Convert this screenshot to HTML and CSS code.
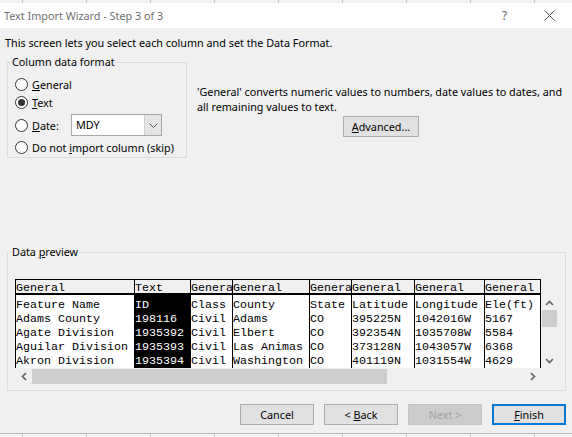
FILE: index.html
```html
<!DOCTYPE html>
<html>
<head>
<meta charset="utf-8">
<title>Text Import Wizard - Step 3 of 3</title>
<link rel="stylesheet" href="styles.css">
</head>
<body>
<div class="sheet sheet-top"></div>
<div class="dialog">
  <div class="titlebar">
    <span class="title">Text Import Wizard - Step 3 of 3</span>
    <span class="cap-btn help">?</span>
    <span class="cap-btn close"><svg width="11" height="11" viewBox="0 0 11 11"><path d="M0.5 0.5L10.5 10.5M10.5 0.5L0.5 10.5" stroke="#555" stroke-width="1" fill="none"/></svg></span>
  </div>
  <div class="content">
    <p class="intro">This screen lets you select each column and set the Data Format.</p>
    <div class="upper">
      <fieldset class="group format">
        <legend>Column data format</legend>
        <label class="opt"><span class="radio"></span><span><u>G</u>eneral</span></label>
        <label class="opt"><span class="radio on"></span><span><u>T</u>ext</span></label>
        <div class="opt opt-date"><span class="radio"></span><span class="date-lbl"><u>D</u>ate:</span><span class="combo"><span class="combo-val">MDY</span><span class="combo-btn"><svg width="9" height="5" viewBox="0 0 9 5"><path d="M0.5 0.5L4.5 4.5L8.5 0.5" stroke="#555" stroke-width="1" fill="none"/></svg></span></span></div>
        <label class="opt"><span class="radio"></span><span>Do not <u>i</u>mport column (skip)</span></label>
      </fieldset>
      <div class="info">
        <p>'General' converts numeric values to numbers, date values to dates, and<br>all remaining values to text.</p>
        <button class="btn adv"><u>A</u>dvanced...</button>
      </div>
    </div>
    <fieldset class="group preview">
      <legend>Data <u>p</u>review</legend>
      <div class="grid-row">
        <div class="viewport">
          <div class="col c1"><div class="hd">General</div><div class="cells"><div>Feature Name</div><div>Adams County</div><div>Agate Division</div><div>Aguilar Division</div><div>Akron Division</div></div></div>
          <div class="col c2"><div class="hd">Text</div><div class="cells sel"><div>ID</div><div>198116</div><div>1935392</div><div>1935393</div><div>1935394</div></div></div>
          <div class="col c3"><div class="hd">Genera</div><div class="cells"><div>Class</div><div>Civil</div><div>Civil</div><div>Civil</div><div>Civil</div></div></div>
          <div class="col c4"><div class="hd">General</div><div class="cells"><div>County</div><div>Adams</div><div>Elbert</div><div>Las Animas</div><div>Washington</div></div></div>
          <div class="col c5"><div class="hd">Genera</div><div class="cells"><div>State</div><div>CO</div><div>CO</div><div>CO</div><div>CO</div></div></div>
          <div class="col c6"><div class="hd">General</div><div class="cells"><div>Latitude</div><div>395225N</div><div>392354N</div><div>373128N</div><div>401119N</div></div></div>
          <div class="col c7"><div class="hd">General</div><div class="cells"><div>Longitude</div><div>1042016W</div><div>1035708W</div><div>1043057W</div><div>1031554W</div></div></div>
          <div class="col c8"><div class="hd">General</div><div class="cells"><div>Ele(ft)</div><div>5167</div><div>5584</div><div>6368</div><div>4629</div></div></div>
        </div>
        <div class="vscroll">
          <span class="arrow"><svg width="9" height="6" viewBox="0 0 9 6"><path d="M1 5L4.5 1.5L8 5" stroke="#606060" stroke-width="1.6" fill="none"/></svg></span>
          <span class="vtrack"><span class="vthumb"></span></span>
          <span class="arrow"><svg width="9" height="6" viewBox="0 0 9 6"><path d="M1 1L4.5 4.5L8 1" stroke="#606060" stroke-width="1.6" fill="none"/></svg></span>
        </div>
      </div>
      <div class="hscroll">
        <span class="arrow"><svg width="6" height="9" viewBox="0 0 6 9"><path d="M5 1L1.5 4.5L5 8" stroke="#606060" stroke-width="1.6" fill="none"/></svg></span>
        <span class="htrack"><span class="hthumb"></span></span>
        <span class="arrow"><svg width="6" height="9" viewBox="0 0 6 9"><path d="M1 1L4.5 4.5L1 8" stroke="#606060" stroke-width="1.6" fill="none"/></svg></span>
      </div>
    </fieldset>
    <div class="buttons">
      <button class="btn">Cancel</button>
      <button class="btn">&lt; <u>B</u>ack</button>
      <button class="btn disabled">Next &gt;</button>
      <button class="btn default"><u>F</u>inish</button>
    </div>
  </div>
</div>
<div class="sheet sheet-bottom"></div>
</body>
</html>
```

FILE: styles.css
```css
* { box-sizing: border-box; }
html, body { margin: 0; padding: 0; }
body {
  width: 572px;
  height: 437px;
  overflow: hidden;
  background: #f0f0f0;
  font-family: "Noto Sans", "Open Sans", sans-serif;
  font-size: 10.8px;
  color: #000;
}
u { text-decoration-thickness: 1px; text-underline-offset: 1px; }

.sheet {
  background-color: #f4f4f4;
  background-image: repeating-linear-gradient(90deg, #c4c4c4 0 1px, transparent 1px 64px);
  background-position: 22px 0;
}
.sheet-top { height: 3px; }
.sheet-bottom { height: 4px; border-top: 1px solid #b8b8b8; }

.dialog { height: 430px; display: flex; flex-direction: column; }

.titlebar {
  height: 25px;
  background: #fff;
  display: flex;
  align-items: center;
}
.title { padding-left: 4px; color: #6f6f6f; flex: 1; }
.cap-btn {
  width: 45px;
  height: 25px;
  display: flex;
  align-items: center;
  justify-content: center;
  color: #6a6a6a;
  font-size: 12px;
}

.content { flex: 1; background: #f0f0f0; }
.intro { margin: 0; padding: 8px 0 0 5px; line-height: 14px; }

.upper { display: flex; align-items: flex-start; margin-top: 5px; }

.group {
  border: 1px solid #dcdcdc;
  margin: 0 0 0 7px;
  min-width: 0;
}
.group legend {
  padding: 0 1px;
  margin-left: -4px;
  line-height: 14px;
}

.format { width: 180px; padding: 8px 0 3px 7px; }
.opt { display: flex; align-items: center; height: 14px; gap: 4px; white-space: nowrap; }
.opt + .opt { margin-top: 4px; }
.opt-date { height: 22px; margin-top: 5px !important; }
.opt-date + .opt { margin-top: 4px; }
.radio {
  width: 13px; height: 13px;
  border: 1px solid #333;
  border-radius: 50%;
  background: #fff;
  display: flex; align-items: center; justify-content: center;
  flex-shrink: 0;
}
.radio.on::after {
  content: "";
  width: 7px; height: 7px;
  border-radius: 50%;
  background: #333;
}
.date-lbl { width: 35px; }
.combo {
  width: 91px; height: 22px;
  border: 1px solid #a8a8a8;
  background: #fff;
  display: flex;
}
.combo-val { flex: 1; padding-left: 4px; line-height: 20px; }
.combo-btn {
  width: 17px;
  background: #e5e5e5;
  border-left: 1px solid #cfcfcf;
  display: flex; align-items: center; justify-content: center;
}

.info { margin-left: 10px; margin-top: 29px; width: 368px; display: flex; flex-direction: column; align-items: center; }
.info p { margin: 0; line-height: 15px; align-self: stretch; white-space: nowrap; }

.btn {
  font: inherit;
  color: #000;
  background: #e1e1e1;
  border: 1px solid #adadad;
  height: 21px;
  width: 74px;
  padding: 0;
  line-height: 18px;
}
.adv { width: 76px; margin-top: 2px; }
.btn.disabled { background: #cccccc; border-color: #c4c4c4; color: #a3a3a3; }
.btn.default { border: 2px solid #0078d7; }

.preview { width: 559px; margin-top: 87px; padding: 20px 8px 5px 7px; }
.grid-row { display: flex; align-items: flex-end; }
.viewport {
  width: 527px;
  height: 89px;
  border-top: 1px solid #000;
  border-right: 1px solid #000;
  display: flex;
  overflow: hidden;
  font-family: "Liberation Mono", "Courier New", monospace;
  font-size: 11.667px;
}
.col { flex-shrink: 0; border-left: 1px solid #000; display: flex; flex-direction: column; }
.c1 { width: 119px; }
.c2 { width: 56px; }
.c3 { width: 42px; }
.c4 { width: 77px; }
.c5 { width: 42px; }
.c6 { width: 63px; }
.c7 { width: 70px; }
.c8 { width: 70px; }
.hd {
  height: 15px;
  border-bottom: 2px solid #000;
  background: #f0f0f0;
  padding-top: 2px;
  line-height: 13px;
  white-space: nowrap;
  overflow: hidden;
}
.cells { flex: 1; background: #fff; padding-top: 3px; white-space: nowrap; overflow: hidden; }
.cells div { height: 14px; line-height: 14px; }
.cells.sel { background: #000; color: #fff; }

.vscroll { width: 15px; height: 73px; display: flex; flex-direction: column; margin-left: 1px; }
.vscroll .arrow { height: 15px; display: flex; align-items: center; justify-content: center; }
.vtrack { flex: 1; }
.vthumb { display: block; height: 17px; background: #cdcdcd; }

.hscroll { width: 526px; height: 17px; display: flex; }
.hscroll .arrow { width: 17px; display: flex; align-items: center; justify-content: center; }
.htrack { flex: 1; display: flex; align-items: center; }
.hthumb { display: block; width: 355px; height: 15px; background: #cdcdcd; }

.buttons { display: flex; justify-content: flex-end; gap: 10px; padding-right: 6px; margin-top: 13px; }
```
